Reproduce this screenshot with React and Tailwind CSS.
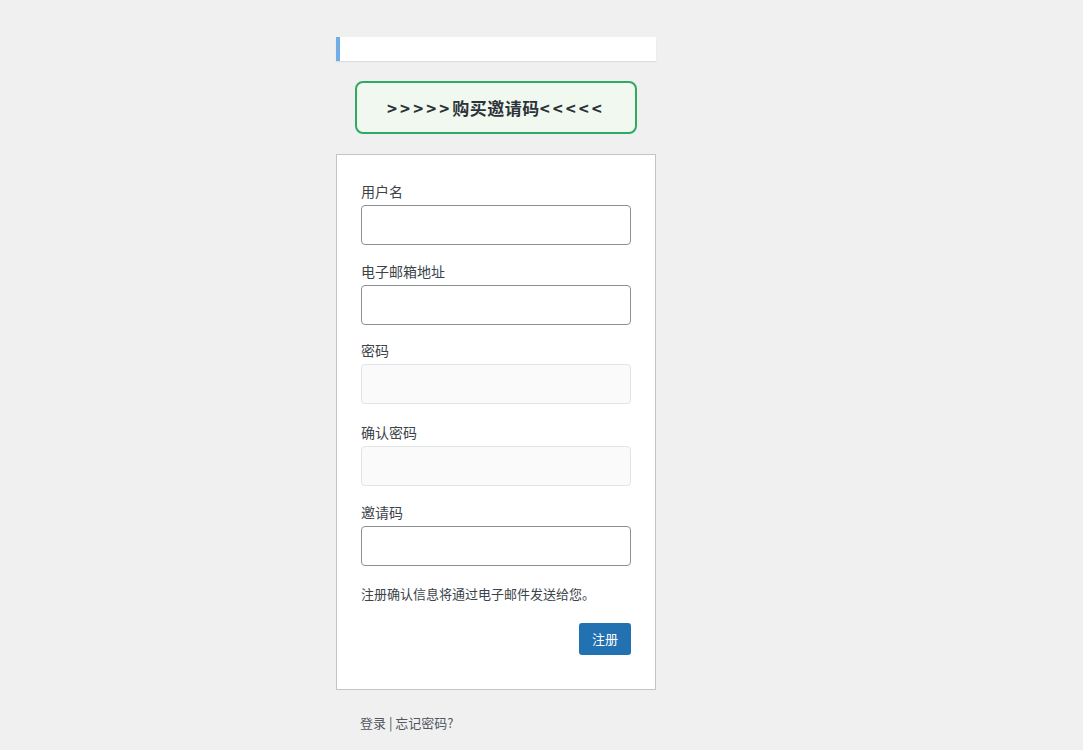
import React from 'react';

const Field = ({label, disabled, className}) => (
    <div className={className}>
        <label className="block text-[14px] leading-[21px] text-[#3c434a]">{label}</label>
        <input
            type="text"
            disabled={disabled}
            className={
                disabled
                    ? "mt-[3px] block w-full h-[40px] rounded-[4px] border border-[#e2e4e7] bg-[#fafafa]"
                    : "mt-[3px] block w-full h-[40px] rounded-[4px] border border-[#8c8f94] bg-white"
            }
        />
    </div>
);

export default function App() {
    return (
        <div
            className="min-h-[750px] bg-[#f0f0f1] text-[#3c434a] pl-[336px]"
            style={{fontFamily: '"Noto Sans CJK SC", "Noto Sans", sans-serif'}}
        >
            <div className="w-[320px] pt-[37px]">
                <div className="h-[24px] bg-white border-l-4 border-[#72aee6] shadow-[0_1px_1px_rgba(0,0,0,0.08)]"></div>

                <div className="mt-[20px] mx-[19px] h-[53px] rounded-[8px] border-2 border-[#2eaa62] bg-[#f0f8ef] flex items-center justify-center">
                    <span className="text-[17px] font-bold text-[#2c3338] tracking-[0.5px]">
                        <span className="tracking-[3px]">&gt;&gt;&gt;&gt;&gt;</span>购买邀请码<span className="tracking-[3px]">&lt;&lt;&lt;&lt;&lt;</span>
                    </span>
                </div>

                <form className="mt-[20px] bg-white border border-[#c3c4c7] px-[24px] pt-[26px] pb-[34px]">
                    <Field label="用户名"/>
                    <Field label="电子邮箱地址" className="mt-[16px]"/>
                    <Field label="密码" disabled className="mt-[15px]"/>
                    <Field label="确认密码" disabled className="mt-[18px]"/>
                    <Field label="邀请码" disabled={false} className="mt-[16px]"/>
                    <p className="mt-[17px] text-[13px] leading-[21px] text-[#3c434a]">注册确认信息将通过电子邮件发送给您。</p>
                    <div className="mt-[19px] flex justify-end">
                        <button
                            type="button"
                            className="h-[32px] px-[13px] rounded-[3px] bg-[#2271b1] text-white text-[13px]"
                        >
                            注册
                        </button>
                    </div>
                </form>

                <p className="mt-[23px] px-[24px] text-[13px] leading-[20px] text-[#50575e]">
                    <a href="#" className="text-[#50575e]">登录</a> | <a href="#" className="text-[#50575e]">忘记密码?</a>
                </p>
            </div>
        </div>
    );
}
